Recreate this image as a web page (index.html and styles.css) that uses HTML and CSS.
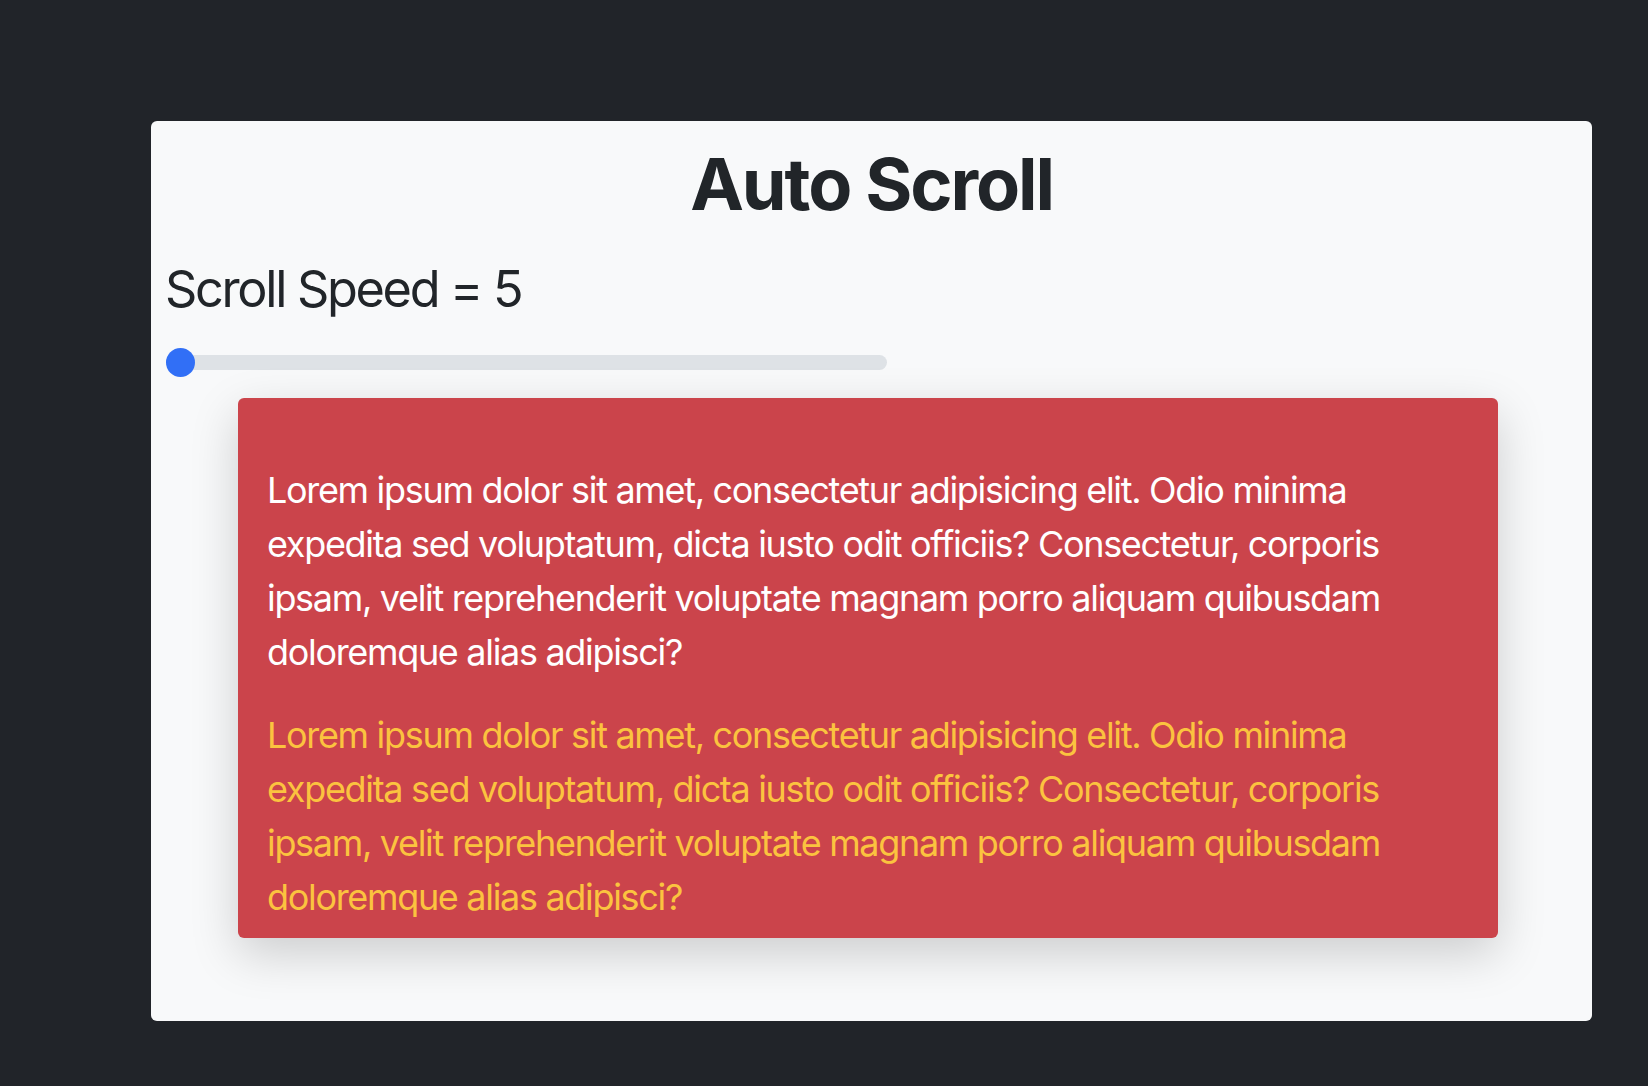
FILE: index.html
```html
<!DOCTYPE html>
<html lang="en">
<head>
<meta charset="utf-8">
<title>Auto Scroll</title>
<link rel="stylesheet" href="styles.css">
</head>
<body>
  <main class="card">
    <h1 class="title">Auto Scroll</h1>
    <h3 class="speed-label">Scroll Speed = 5</h3>
    <input class="speed-range" type="range" min="5" max="100" value="5" aria-label="Scroll speed">
    <section class="scroll-box">
      <p class="para para-light">Lorem ipsum dolor sit amet, consectetur adipisicing elit. Odio minima expedita sed voluptatum, dicta iusto odit officiis? Consectetur, corporis ipsam, velit reprehenderit voluptate magnam porro aliquam quibusdam doloremque alias adipisci?</p>
      <p class="para para-warn">Lorem ipsum dolor sit amet, consectetur adipisicing elit. Odio minima expedita sed voluptatum, dicta iusto odit officiis? Consectetur, corporis ipsam, velit reprehenderit voluptate magnam porro aliquam quibusdam doloremque alias adipisci?</p>
    </section>
  </main>
</body>
</html>
```

FILE: styles.css
```css
* { box-sizing: border-box; }

html, body {
  margin: 0;
  height: 100%;
}

body {
  background: #212429;
  font-family: Inter, "Noto Sans", "Liberation Sans", sans-serif;
  color: #212529;
  padding: 121px 0 0 151px;
}

.card {
  width: 1441px;
  height: 900px;
  background: #f8f9fa;
  border-radius: 6px;
  padding: 20px 14px 14px;
  display: flex;
  flex-direction: column;
}

.title {
  margin: 0;
  text-align: center;
  font-size: 72px;
  font-weight: 700;
  line-height: 1.2;
  letter-spacing: -2.1px;
}

.speed-label {
  margin: 32px 0 0;
  font-size: 50.4px;
  font-weight: 400;
  line-height: 1.2;
  letter-spacing: -2.3px;
}

.speed-range {
  -webkit-appearance: none;
  appearance: none;
  width: 721px;
  height: 43px;
  margin: 21px 0 0 1px;
  padding: 0;
  background: transparent;
}

.speed-range::-webkit-slider-runnable-track {
  height: 14.4px;
  background: #dee2e6;
  border-radius: 8px;
}

.speed-range::-webkit-slider-thumb {
  -webkit-appearance: none;
  appearance: none;
  width: 29px;
  height: 29px;
  border-radius: 50%;
  background: #316ff6;
  border: 0;
  margin-top: -7.3px;
}

.speed-range::-moz-range-track {
  height: 14.4px;
  background: #dee2e6;
  border-radius: 8px;
}

.speed-range::-moz-range-thumb {
  width: 29px;
  height: 29px;
  border-radius: 50%;
  background: #316ff6;
  border: 0;
}

.scroll-box {
  width: 1260px;
  height: 540px;
  margin: 14px 0 0 73px;
  background: #cb444b;
  border-radius: 6px;
  box-shadow: 0 1rem 3rem rgba(0, 0, 0, 0.175);
  padding: 65px 29px 14px;
  overflow: hidden;
}

.para {
  margin: 0 0 28.8px;
  font-size: 36px;
  line-height: 1.5;
  letter-spacing: -1.32px;
}

.para-light { color: #ffffff; }
.para-warn { color: #fbc33f; }
```
